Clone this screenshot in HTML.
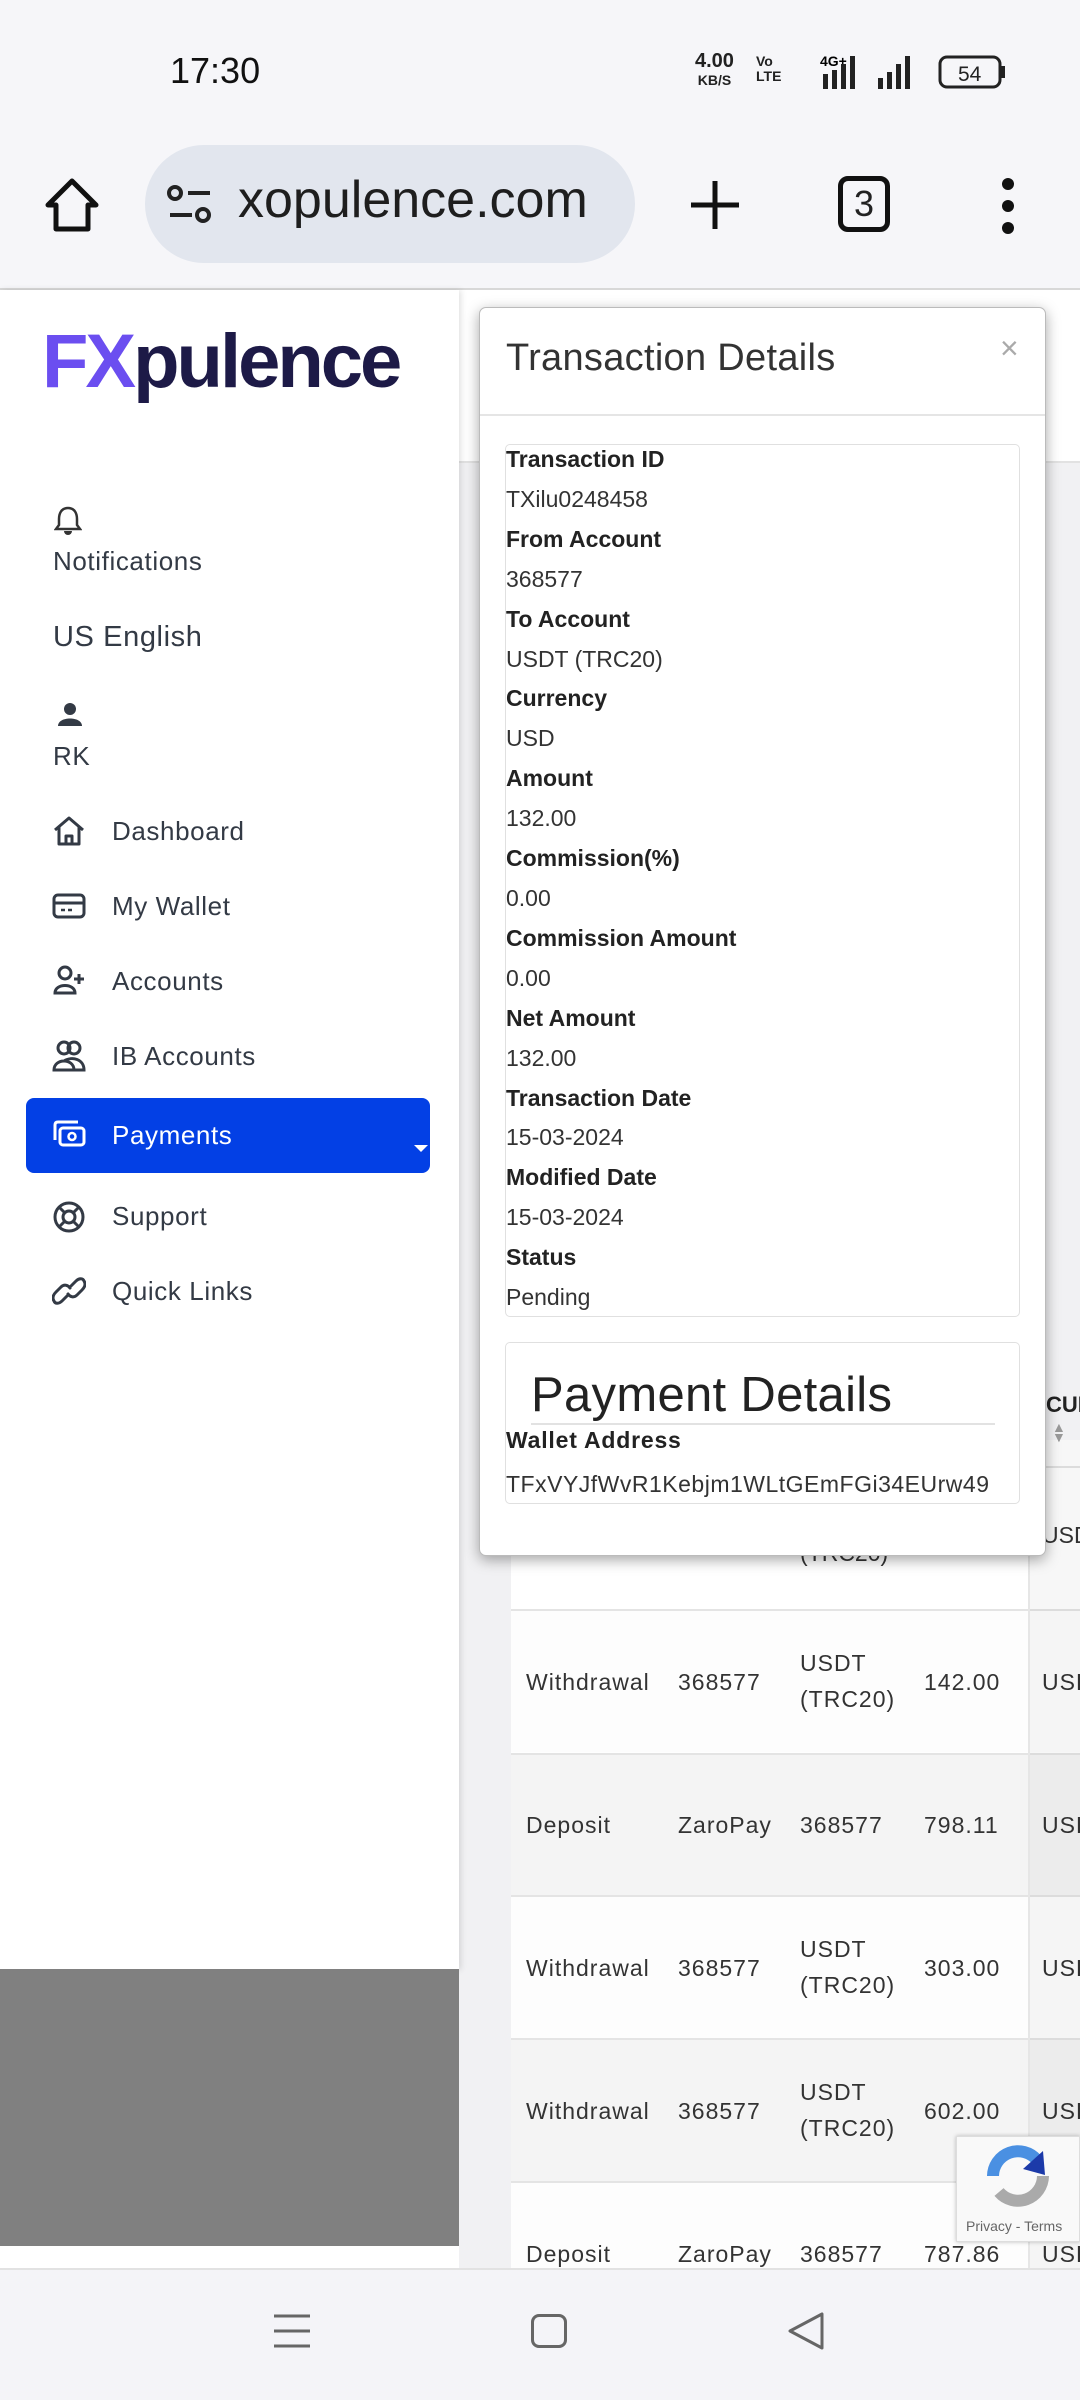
<!DOCTYPE html>
<html><head><meta charset="utf-8"><style>
*{margin:0;padding:0;box-sizing:border-box}
body{width:1080px;height:2400px;position:relative;overflow:hidden;background:#f1f1f3;font-family:"Liberation Sans",sans-serif;color:#222}
.a{position:absolute}
.t{position:absolute;white-space:nowrap}
.nav{font-size:26px;color:#333a45;letter-spacing:.6px}
.row{position:absolute;left:511px;width:600px;height:143px;border-top:2px solid #e4e4e4;font-size:23px;color:#333;letter-spacing:1px}
.row span{position:absolute;white-space:nowrap;line-height:36px}
.lab{font-weight:bold;font-size:23px;color:#222}
.val{font-size:23px;color:#333}
</style></head><body>
<!-- status/browser bar -->
<div class="a" style="left:0;top:0;width:1080px;height:289px;background:#f6f6f9"></div>
<div class="t" style="left:170px;top:50px;font-size:36px;color:#111">17:30</div>
<div class="t" style="left:695px;top:52px;font-size:20px;line-height:18px;font-weight:bold;text-align:center;color:#222">4.00<br><span style="font-size:14px">KB/S</span></div>
<div class="t" style="left:756px;top:54px;font-size:14px;line-height:15px;font-weight:bold;color:#222">Vo<br>LTE</div>
<svg class="a" style="left:820px;top:52px" width="190" height="40">
<text x="0" y="14" font-size="14" font-weight="bold" font-family="Liberation Sans">4G+</text>
<rect x="3" y="22" width="5" height="15" fill="#222"/><rect x="12" y="18" width="5" height="19" fill="#222"/><rect x="21" y="12" width="5" height="25" fill="#222"/><rect x="30" y="4" width="5" height="33" fill="#222"/>
<rect x="58" y="26" width="5" height="11" fill="#222"/><rect x="67" y="20" width="5" height="17" fill="#222"/><rect x="76" y="12" width="5" height="25" fill="#222"/><rect x="85" y="4" width="5" height="33" fill="#222"/>
<rect x="120" y="5" width="60" height="30" rx="7" fill="none" stroke="#222" stroke-width="3"/><rect x="181" y="14" width="4" height="12" fill="#222"/>
<text x="138" y="29" font-size="21" font-family="Liberation Sans" fill="#222">54</text>
</svg>
<svg class="a" style="left:42px;top:175px" width="60" height="60"><path d="M30 6 L54 30 L46 30 L46 54 L14 54 L14 30 L6 30 Z" fill="none" stroke="#111" stroke-width="5" stroke-linejoin="round"/></svg>
<div class="a" style="left:145px;top:145px;width:490px;height:118px;border-radius:59px;background:#e2e6ee"></div>
<svg class="a" style="left:166px;top:183px" width="50" height="44"><circle cx="9" cy="10" r="6" fill="none" stroke="#222" stroke-width="4"/><line x1="22" y1="10" x2="44" y2="10" stroke="#222" stroke-width="4"/><line x1="4" y1="32" x2="26" y2="32" stroke="#222" stroke-width="4"/><circle cx="37" cy="32" r="6" fill="none" stroke="#222" stroke-width="4"/></svg>
<div class="t" style="left:238px;top:170px;font-size:52px;color:#1e1e1e">xopulence.com</div>
<svg class="a" style="left:688px;top:178px" width="54" height="54"><line x1="27" y1="3" x2="27" y2="51" stroke="#111" stroke-width="5"/><line x1="3" y1="27" x2="51" y2="27" stroke="#111" stroke-width="5"/></svg>
<div class="a" style="left:838px;top:176px;width:52px;height:56px;border:5px solid #111;border-radius:10px;font-size:36px;text-align:center;line-height:46px">3</div>
<svg class="a" style="left:998px;top:176px" width="20" height="60"><circle cx="10" cy="8" r="6" fill="#111"/><circle cx="10" cy="30" r="6" fill="#111"/><circle cx="10" cy="52" r="6" fill="#111"/></svg>
<div class="a" style="left:0;top:288px;width:1080px;height:2px;background:#d8d8d8"></div>

<!-- main area -->
<div class="a" style="left:459px;top:290px;width:621px;height:173px;background:#fff;border-bottom:2px solid #e2e2e2"></div>
<div class="a" style="left:511px;top:1440px;width:569px;height:830px;background:#fff"></div>
<div class="t" style="left:1046px;top:1392px;font-size:22px;font-weight:bold;color:#222">CUR</div>
<div class="t" style="left:1052px;top:1422px;font-size:14px;color:#999;line-height:10px">▲<br>▼</div>
<div class="a" style="left:511px;top:1466px;width:569px;height:2px;background:#e4e4e4"></div>
<div class="t" style="left:800px;top:1540px;font-size:23px;color:#333">(TRC20)</div>
<div class="t" style="left:1042px;top:1522px;font-size:23px;color:#333">USD</div>
<div class="row" style="top:1609px;background:#fdfdfd"><span style="left:15px;top:53px">Withdrawal</span><span style="left:167px;top:53px">368577</span><span style="left:289px;top:34px;line-height:36px">USDT<br>(TRC20)</span><span style="left:413px;top:53px">142.00</span><span style="left:531px;top:53px">USD</span></div>
<div class="row" style="top:1753px;background:#f4f4f4"><span style="left:15px;top:52px">Deposit</span><span style="left:167px;top:52px">ZaroPay</span><span style="left:289px;top:52px">368577</span><span style="left:413px;top:52px">798.11</span><span style="left:531px;top:52px">USD</span></div>
<div class="row" style="top:1895px;background:#fdfdfd"><span style="left:15px;top:53px">Withdrawal</span><span style="left:167px;top:53px">368577</span><span style="left:289px;top:34px">USDT<br>(TRC20)</span><span style="left:413px;top:53px">303.00</span><span style="left:531px;top:53px">USD</span></div>
<div class="row" style="top:2038px;background:#f4f4f4"><span style="left:15px;top:53px">Withdrawal</span><span style="left:167px;top:53px">368577</span><span style="left:289px;top:34px">USDT<br>(TRC20)</span><span style="left:413px;top:53px">602.00</span><span style="left:531px;top:53px">USD</span></div>
<div class="row" style="top:2181px;background:#fdfdfd"><span style="left:15px;top:53px">Deposit</span><span style="left:167px;top:53px">ZaroPay</span><span style="left:289px;top:53px">368577</span><span style="left:413px;top:53px">787.86</span><span style="left:531px;top:53px">USD</span></div>
<div class="a" style="left:1028px;top:1440px;width:52px;height:830px;background:rgba(0,0,0,.03);border-left:2px solid #e6e6e6"></div>
<div class="a" style="left:956px;top:2136px;width:124px;height:106px;background:#f9f9f9;border:1px solid #ddd;box-shadow:0 0 4px rgba(0,0,0,.25)"></div>
<svg class="a" style="left:985px;top:2143px" width="66" height="66"><path d="M8 33 A25 25 0 0 1 52 17" fill="none" stroke="#4a90e2" stroke-width="12"/><path d="M58 8 L60 32 L38 26 Z" fill="#1c3aa9"/><path d="M58 33 A25 25 0 0 1 14 49" fill="none" stroke="#aaa" stroke-width="12"/></svg>
<div class="t" style="left:966px;top:2218px;font-size:14px;color:#666">Privacy - Terms</div>

<!-- sidebar -->
<div class="a" style="left:0;top:290px;width:459px;height:1680px;background:#fff;box-shadow:2px 0 6px rgba(0,0,0,.12)"></div>
<div class="a" style="left:0;top:1969px;width:459px;height:277px;background:#808080"></div>
<div class="a" style="left:0;top:2246px;width:459px;height:22px;background:#fff"></div>
<div class="t" style="left:42px;top:318px;font-size:76px;font-weight:bold;letter-spacing:-3px;color:#1d1a47"><span style="color:#6b4ef0">FX</span>pulence</div>

<svg class="a" style="left:54px;top:505px" width="28" height="30"><path d="M14 3 C7 3 5 9 5 14 L5 20 L2 24 L26 24 L23 20 L23 14 C23 9 21 3 14 3 Z" fill="none" stroke="#333" stroke-width="2.5"/><path d="M10 26 A4 4 0 0 0 18 26" fill="#333"/></svg>
<div class="t nav" style="left:53px;top:546px">Notifications</div>
<div class="t nav" style="left:53px;top:621px;font-size:29px">US English</div>
<svg class="a" style="left:57px;top:702px" width="26" height="24"><circle cx="13" cy="7" r="6" fill="#333a45"/><path d="M1 24 C1 14 25 14 25 24 Z" fill="#333a45"/></svg>
<div class="t nav" style="left:53px;top:741px">RK</div>

<svg class="a" style="left:52px;top:815px" width="34" height="32"><path d="M3 15 L17 3 L31 15 M7 12 L7 29 L27 29 L27 12 M14 29 L14 21 L20 21 L20 29" fill="none" stroke="#333a45" stroke-width="3" stroke-linejoin="round"/></svg>
<div class="t nav" style="left:112px;top:816px">Dashboard</div>
<svg class="a" style="left:52px;top:893px" width="34" height="28"><rect x="2" y="2" width="30" height="22" rx="4" fill="none" stroke="#333a45" stroke-width="3"/><line x1="2" y1="10" x2="32" y2="10" stroke="#333a45" stroke-width="3"/><line x1="9" y1="17" x2="13" y2="17" stroke="#333a45" stroke-width="2.5"/><line x1="16" y1="17" x2="20" y2="17" stroke="#333a45" stroke-width="2.5"/></svg>
<div class="t nav" style="left:112px;top:891px">My Wallet</div>
<svg class="a" style="left:52px;top:964px" width="34" height="32"><circle cx="13" cy="9" r="6" fill="none" stroke="#333a45" stroke-width="3"/><path d="M3 29 C3 19 23 19 23 29 Z" fill="none" stroke="#333a45" stroke-width="3"/><path d="M27 10 L27 20 M22 15 L32 15" stroke="#333a45" stroke-width="3"/></svg>
<div class="t nav" style="left:112px;top:966px">Accounts</div>
<svg class="a" style="left:52px;top:1039px" width="34" height="34"><circle cx="12" cy="9" r="6" fill="none" stroke="#333a45" stroke-width="3"/><circle cx="22" cy="9" r="6" fill="none" stroke="#333a45" stroke-width="3"/><path d="M2 31 C2 19 22 19 22 31 Z M12 22 C20 17 32 20 32 31 L22 31" fill="none" stroke="#333a45" stroke-width="3"/></svg>
<div class="t nav" style="left:112px;top:1041px">IB Accounts</div>
<div class="a" style="left:26px;top:1098px;width:404px;height:75px;border-radius:8px;background:#0340e5"></div>
<svg class="a" style="left:52px;top:1120px" width="34" height="28"><path d="M3 20 L3 5 C3 3 4 2 6 2 L26 2" fill="none" stroke="#fff" stroke-width="3"/><rect x="8" y="8" width="24" height="17" rx="3" fill="none" stroke="#fff" stroke-width="3"/><circle cx="20" cy="16.5" r="3.5" fill="none" stroke="#fff" stroke-width="2.5"/></svg>
<div class="t nav" style="left:112px;top:1120px;color:#fff">Payments</div>
<svg class="a" style="left:414px;top:1145px" width="14" height="8"><path d="M0 0 L14 0 L7 7 Z" fill="#fff"/></svg>
<svg class="a" style="left:52px;top:1200px" width="34" height="34"><circle cx="17" cy="17" r="14" fill="none" stroke="#333a45" stroke-width="3"/><circle cx="17" cy="17" r="6" fill="none" stroke="#333a45" stroke-width="3"/><path d="M7 7 L13 13 M27 7 L21 13 M7 27 L13 21 M27 27 L21 21" stroke="#333a45" stroke-width="3"/></svg>
<div class="t nav" style="left:112px;top:1201px">Support</div>
<svg class="a" style="left:52px;top:1276px" width="34" height="30"><path d="M15 20 L10 25 C7 28 3 28 2 25 C0 22 1 19 4 16 L9 11 C12 8 16 9 18 12 M19 10 L24 5 C27 2 31 2 32 5 C34 8 33 11 30 14 L25 19 C22 22 18 21 16 18" fill="none" stroke="#333a45" stroke-width="3" stroke-linecap="round"/></svg>
<div class="t nav" style="left:112px;top:1276px">Quick Links</div>

<!-- modal -->
<div class="a" style="left:479px;top:307px;width:567px;height:1249px;background:#fff;border:1px solid #bbb;border-radius:7px;box-shadow:0 4px 14px rgba(0,0,0,.35)"></div>
<div class="t" style="left:506px;top:337px;font-size:38px;font-weight:300;color:#333;letter-spacing:.3px">Transaction Details</div>
<div class="t" style="left:1000px;top:330px;font-size:32px;color:#aaa">×</div>
<div class="a" style="left:480px;top:414px;width:565px;height:2px;background:#e5e5e5"></div>
<div class="a" style="left:505px;top:444px;width:515px;height:873px;border:1px solid #e0e0e0;border-radius:5px"></div>
<div class="a" style="left:506px;top:440px;line-height:39.9px">
<div class="lab">Transaction ID</div><div class="val">TXilu0248458</div>
<div class="lab">From Account</div><div class="val">368577</div>
<div class="lab">To Account</div><div class="val">USDT (TRC20)</div>
<div class="lab">Currency</div><div class="val">USD</div>
<div class="lab">Amount</div><div class="val">132.00</div>
<div class="lab">Commission(%)</div><div class="val">0.00</div>
<div class="lab">Commission Amount</div><div class="val">0.00</div>
<div class="lab">Net Amount</div><div class="val">132.00</div>
<div class="lab">Transaction Date</div><div class="val">15-03-2024</div>
<div class="lab">Modified Date</div><div class="val">15-03-2024</div>
<div class="lab">Status</div><div class="val">Pending</div>
</div>
<div class="a" style="left:505px;top:1342px;width:515px;height:162px;border:1px solid #e0e0e0;border-radius:5px"></div>
<div class="t" style="left:531px;top:1367px;font-size:49px;color:#222;letter-spacing:.3px">Payment Details</div>
<div class="a" style="left:531px;top:1423px;width:464px;height:2px;background:#e2e2e2"></div>
<div class="t lab" style="left:506px;top:1427px;letter-spacing:.8px">Wallet Address</div>
<div class="t val" style="left:506px;top:1471px;letter-spacing:.5px">TFxVYJfWvR1Kebjm1WLtGEmFGi34EUrw49</div>

<!-- nav bar -->
<div class="a" style="left:0;top:2268px;width:1080px;height:132px;background:#f4f4f8;border-top:2px solid #e2e2e2"></div>
<svg class="a" style="left:272px;top:2313px" width="40" height="36"><path d="M2 3 H38 M2 18 H38 M2 33 H38" stroke="#666" stroke-width="3"/></svg>
<div class="a" style="left:531px;top:2314px;width:36px;height:34px;border:3px solid #666;border-radius:8px"></div>
<svg class="a" style="left:786px;top:2311px" width="40" height="40"><path d="M36 3 L36 37 L4 20 Z" fill="none" stroke="#666" stroke-width="3" stroke-linejoin="round"/></svg>
</body></html>
